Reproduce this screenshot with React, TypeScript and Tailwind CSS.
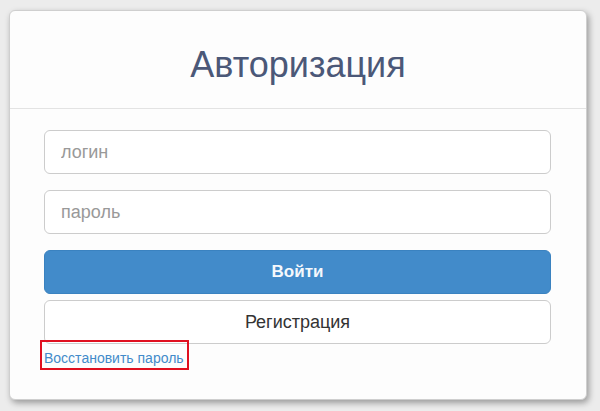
export default function App() {
  return (
    <div
      className="w-[600px] h-[411px] bg-[#ececec] pt-[10px] pl-[9px]"
      style={{ fontFamily: '"Liberation Sans", Arial, sans-serif' }}
    >
      <div className="w-[578px] h-[390px] bg-[#fdfdfd] rounded-[6px] border border-[#cfcfcf] shadow-[2px_3px_6px_rgba(0,0,0,0.35)] flex flex-col">
        <div className="h-[98px] border-b border-[#e3e3e3] pt-[34px] text-center">
          <h1 className="text-[36px] leading-[40px] text-[#4b5878]">Авторизация</h1>
        </div>
        <div className="pl-[34px] pr-[35px] pt-[21px] flex flex-col">
          <input
            placeholder="логин"
            className="h-[44px] w-full rounded-[6px] border border-[#cccccc] bg-white px-[16px] text-[18px] text-[#555] placeholder:text-[#999] outline-none"
          />
          <input
            placeholder="пароль"
            className="mt-[16px] h-[44px] w-full rounded-[6px] border border-[#cccccc] bg-white px-[16px] text-[18px] text-[#555] placeholder:text-[#999] outline-none"
          />
          <button className="mt-[16px] h-[44px] w-full rounded-[6px] border border-[#3a82c0] bg-[#428bca] text-[17px] font-bold text-[#f4f8fc]">
            Войти
          </button>
          <button className="mt-[6px] h-[44px] w-full rounded-[6px] border border-[#cccccc] bg-white text-[18px] text-[#333]">
            Регистрация
          </button>
          <div className="mt-[2px] h-[20px] relative">
            <a href="#" className="relative z-10 text-[14px] leading-[20px] text-[#428bca]">
              Восстановить пароль
            </a>
            <span className="absolute left-[-4px] top-[-6px] w-[149px] h-[30px] border-[2px] border-[#e01020] z-20 pointer-events-none" />
          </div>
        </div>
      </div>
    </div>
  );
}
